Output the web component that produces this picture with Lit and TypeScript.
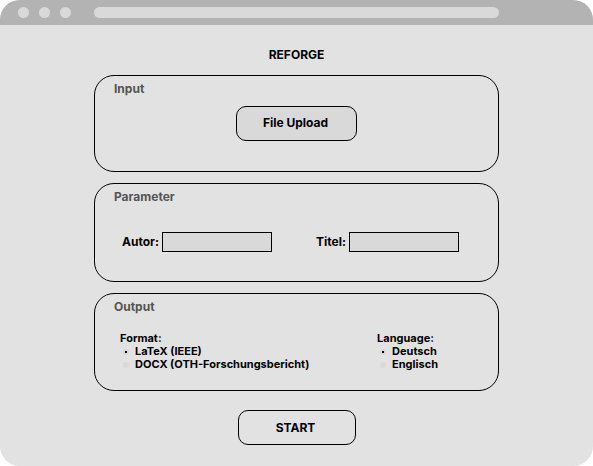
import { LitElement, html, css } from "lit";
import { customElement, property } from "lit/decorators.js";

@customElement("option-group")
class OptionGroup extends LitElement {
  @property() label = "";
  @property() name = "";
  @property({ attribute: false }) options: string[] = [];

  static styles = css`
    :host { display: block; }
    .group { margin: 0; padding: 0; border: 0; min-width: 0; font-size: 11px; line-height: 13px; }
    .legend { padding: 0; }
    .option { display: flex; align-items: center; gap: 6px; padding-left: 3px; white-space: nowrap; }
    .radio {
      appearance: none; flex: none; width: 6px; height: 6px; margin: 0;
      border-radius: 50%; background: #d9d9d9; display: grid; place-items: center;
    }
    .radio:checked::before { content: ""; width: 2px; height: 2px; background: #000; }
  `;

  render() {
    return html`<fieldset class="group">
      <legend class="legend">${this.label}</legend>
      ${this.options.map(
        (o, i) => html`<label class="option"
          ><input class="radio" type="radio" name=${this.name} .value=${o} ?checked=${i === 0} />${o}</label
        >`
      )}
    </fieldset>`;
  }
}

@customElement("app-root")
class AppRoot extends LitElement {
  static styles = css`
    :host {
      display: block;
      font-family: Inter, "Liberation Sans", sans-serif;
      font-weight: 700; font-size: 12px; line-height: 16px; color: #000;
    }
    * { box-sizing: border-box; }
    .window {
      min-height: 100vh; background: #e2e2e2; border-radius: 20px; overflow: hidden;
    }
    .bar {
      display: flex; align-items: center; height: 25px; gap: 10px;
      padding: 0 94px 0 18px; background: #b3b3b3;
    }
    .dot { flex: none; width: 11px; height: 11px; border-radius: 50%; background: #d9d9d9; }
    .address { flex: 1; height: 11px; margin-left: 13px; border-radius: 6px; background: #d9d9d9; }
    .page { display: flex; flex-direction: column; padding: 22px 94px 20px; }
    .title { margin: 0 0 12px; font-size: 12px; text-align: center; }
    .cards { display: grid; gap: 11px; }
    .card { border: 1px solid #000; border-radius: 20px; padding: 5px 0 0; }
    .heading { margin: 0 19px; font-size: 12px; color: #545454; }
    .button {
      height: 35px; border: 1px solid #000; border-radius: 10px; padding: 0 2px 2px 0;
      font: inherit; color: inherit; background: none;
    }
    .upload { display: block; width: 121px; margin: 9px auto 30px; background: #d9d9d9; }
    .start { align-self: center; width: 118px; margin-top: 19px; padding-bottom: 0; }
    .fields { display: flex; justify-content: space-between; padding: 27px 39px 29px 27px; }
    .field { display: flex; align-items: center; gap: 3px; }
    .text {
      width: 110px; height: 20px; border: 1px solid #000; border-radius: 0;
      padding: 0 4px; background: #d9d9d9; font: inherit;
    }
    .choices { display: flex; justify-content: space-between; padding: 17px 60px 19px 25px; }
  `;

  render() {
    return html`<div class="window">
      <div class="bar">
        <span class="dot"></span><span class="dot"></span><span class="dot"></span>
        <span class="address"></span>
      </div>
      <main class="page">
        <h1 class="title">REFORGE</h1>
        <div class="cards">
          <section class="card">
            <h2 class="heading">Input</h2>
            <button class="button upload" type="button">File Upload</button>
          </section>
          <section class="card">
            <h2 class="heading">Parameter</h2>
            <div class="fields">
              <label class="field">Autor:<input class="text" type="text" name="autor" /></label>
              <label class="field">Titel:<input class="text" type="text" name="titel" /></label>
            </div>
          </section>
          <section class="card">
            <h2 class="heading">Output</h2>
            <div class="choices">
              <option-group label="Format:" name="format"
                .options=${["LaTeX (IEEE)", "DOCX (OTH-Forschungsbericht)"]}></option-group>
              <option-group label="Language:" name="language"
                .options=${["Deutsch", "Englisch"]}></option-group>
            </div>
          </section>
        </div>
        <button class="button start" type="button">START</button>
      </main>
    </div>`;
  }
}
